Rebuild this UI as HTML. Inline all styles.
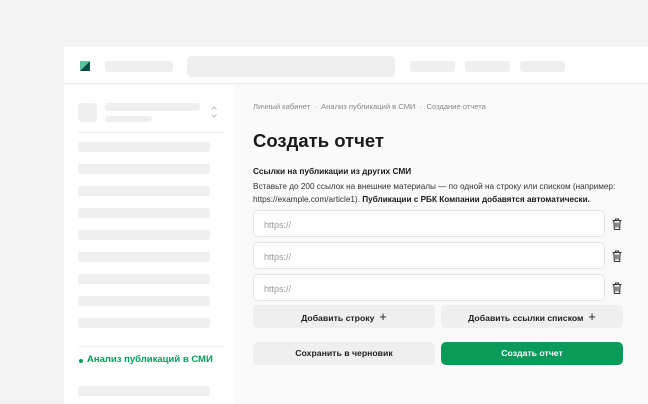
<!DOCTYPE html>
<html><head><meta charset="utf-8"><style>
*{margin:0;padding:0;box-sizing:border-box}
body{width:648px;height:404px;overflow:hidden;background:#f4f4f4;font-family:"Liberation Sans","Noto Sans CJK SC",sans-serif;position:relative}
.a{position:absolute}
.sk{position:absolute;background:#efefef;border-radius:3px}
.t{position:absolute;white-space:nowrap}
.inp{position:absolute;left:253px;width:352px;height:27px;background:#fff;border:1px solid #e6e6e6;border-radius:5px;font-size:9px;color:#999;padding:9px 0 0 10px}
.btn{position:absolute;height:23px;border-radius:5px;background:#efefef;font-size:8.7px;font-weight:bold;color:#222;text-align:center;line-height:23px}
.tr{position:absolute;left:612px;width:10px;height:12px}
</style></head><body>
<div class="a" style="left:64px;top:47px;width:584px;height:357px;background:#fafafa"></div>
<div class="a" style="left:64px;top:47px;width:584px;height:37px;background:#fff;border-bottom:1px solid #ececec"></div>
<svg class="a" style="left:80px;top:61px" width="10" height="10"><polygon points="0,0 10,0 0,10" fill="#5fbf9a"/><polygon points="10,0 10,10 0,10" fill="#0c4d45"/></svg>
<div class="sk" style="left:105px;top:61px;width:68px;height:11px"></div>
<div class="sk" style="left:187px;top:56px;width:208px;height:21px;border-radius:5px"></div>
<div class="sk" style="left:410px;top:61px;width:45px;height:11px"></div>
<div class="sk" style="left:465px;top:61px;width:45px;height:11px"></div>
<div class="sk" style="left:520px;top:61px;width:45px;height:11px"></div>
<div class="a" style="left:64px;top:85px;width:170px;height:319px;background:#fff"></div>
<div class="sk" style="left:78px;top:103px;width:19px;height:19px;border-radius:4px"></div>
<div class="sk" style="left:105px;top:103px;width:95px;height:8px"></div>
<div class="sk" style="left:105px;top:116px;width:47px;height:6px"></div>
<svg class="a" style="left:210px;top:105px" width="8" height="14" fill="none" stroke="#bbb" stroke-width="0.9"><path d="M1.5 4.5L4 2l2.5 2.5M1.5 9.5L4 12l2.5-2.5"/></svg>
<div class="a" style="left:78px;top:132px;width:146px;height:1px;background:#eee"></div>
<div class="sk" style="left:78px;top:142px;width:132px;height:10px"></div>
<div class="sk" style="left:78px;top:164px;width:132px;height:10px"></div>
<div class="sk" style="left:78px;top:186px;width:132px;height:10px"></div>
<div class="sk" style="left:78px;top:208px;width:132px;height:10px"></div>
<div class="sk" style="left:78px;top:230px;width:132px;height:10px"></div>
<div class="sk" style="left:78px;top:252px;width:132px;height:10px"></div>
<div class="sk" style="left:78px;top:274px;width:132px;height:10px"></div>
<div class="sk" style="left:78px;top:296px;width:132px;height:10px"></div>
<div class="sk" style="left:78px;top:318px;width:132px;height:10px"></div>
<div class="a" style="left:78px;top:346px;width:146px;height:1px;background:#f0f0f0"></div>
<div class="a" style="left:79px;top:359px;width:4px;height:4px;border-radius:50%;background:#0a9a5a"></div>
<div class="t" style="left:87px;top:354px;font-size:9.5px;font-weight:bold;color:#0a9a5a">Анализ публикаций в СМИ</div>
<div class="sk" style="left:78px;top:386px;width:132px;height:10px"></div>
<div class="t" style="left:253px;top:102px;font-size:7.6px;color:#888">Личный кабинет &nbsp;·&nbsp; Анализ публикаций в СМИ &nbsp;·&nbsp; Создание отчета</div>
<div class="t" style="left:253px;top:130px;font-size:18.5px;font-weight:bold;color:#1a1a1a">Создать отчет</div>
<div class="t" style="left:253px;top:166px;font-size:8.3px;font-weight:bold;color:#1a1a1a">Ссылки на публикации из других СМИ</div>
<div class="t" style="left:253px;top:181px;font-size:8.2px;color:#333;line-height:12.5px">Вставьте до 200 ссылок на внешние материалы — по одной на строку или списком (например:<br>https://example.com/article1). <b style="color:#1a1a1a">Публикации с РБК Компании добавятся автоматически.</b></div>
<div class="inp" style="top:210px">https://</div>
<div class="inp" style="top:242px">https://</div>
<div class="inp" style="top:274px">https://</div>
<svg class="tr" style="top:218px" viewBox="0 0 10 12" fill="none" stroke="#333" stroke-width="1.1"><path d="M0.5 2.5h9M3.5 2.5V1h3v1.5M1.8 2.5l.6 9h5.2l.6-9M4 4.5v5M6 4.5v5"/></svg>
<svg class="tr" style="top:250px" viewBox="0 0 10 12" fill="none" stroke="#333" stroke-width="1.1"><path d="M0.5 2.5h9M3.5 2.5V1h3v1.5M1.8 2.5l.6 9h5.2l.6-9M4 4.5v5M6 4.5v5"/></svg>
<svg class="tr" style="top:282px" viewBox="0 0 10 12" fill="none" stroke="#333" stroke-width="1.1"><path d="M0.5 2.5h9M3.5 2.5V1h3v1.5M1.8 2.5l.6 9h5.2l.6-9M4 4.5v5M6 4.5v5"/></svg>
<div class="btn" style="left:253px;top:305px;width:182px">Добавить строку &nbsp;<span style="font-size:13px;font-weight:normal">+</span></div>
<div class="btn" style="left:441px;top:305px;width:182px">Добавить ссылки списком &nbsp;<span style="font-size:13px;font-weight:normal">+</span></div>
<div class="btn" style="left:253px;top:342px;width:182px">Сохранить в черновик</div>
<div class="btn" style="left:441px;top:342px;width:182px;background:#0a9a5a;color:#fff">Создать отчет</div>
</body></html>
